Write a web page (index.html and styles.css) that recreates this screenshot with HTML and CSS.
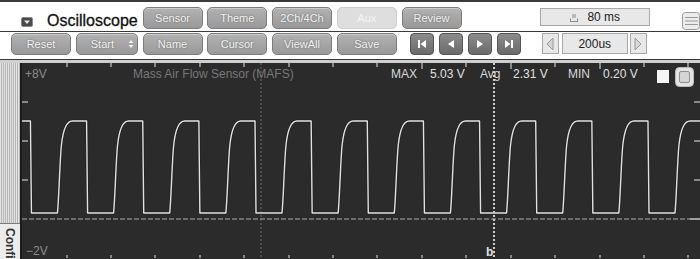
FILE: index.html
```html
<!DOCTYPE html>
<html>
<head>
<meta charset="utf-8">
<link rel="stylesheet" href="styles.css">
</head>
<body>
<div class="app">
  <div class="row row1">
    <span class="dd"><svg width="12" height="10" viewBox="0 0 12 10"><rect x="0.5" y="0.5" width="11" height="9" rx="1.5" fill="#4a4a4a" stroke="#8a8a8a"/><path d="M3 3.5h6L6 7z" fill="#e8e8e8"/></svg></span>
    <span class="title">Oscilloscope</span>
    <div class="btns">
      <div class="btn">Sensor</div>
      <div class="btn">Theme</div>
      <div class="btn">2Ch/4Ch</div>
      <div class="btn off">Aux</div>
      <div class="btn">Review</div>
    </div>
    <div class="timebox"><svg width="10" height="9" viewBox="0 0 10 9"><path d="M1 8.5h8M1.5 8.5v-3M8.5 8.5v-3M4 1v4M6 1v4" stroke="#8a8a8a" stroke-width="1" fill="none"/></svg><span>80 ms</span></div>
    <div class="listicon"><svg width="18" height="18" viewBox="0 0 18 18"><rect x="0.5" y="0.5" width="17" height="17" rx="3" fill="#ececec" stroke="#999"/><path d="M3 5.5h13M3 9h13M3 12.5h13" stroke="#999"/></svg></div>
  </div>
  <div class="row row2">
    <div class="btns">
      <div class="btn">Reset</div>
      <div class="btn start"><span>Start</span><svg width="6" height="10" viewBox="0 0 6 10"><path d="M0.5 4L3 1l2.5 3zM0.5 6L3 9l2.5-3z" fill="#f2f2f2"/></svg></div>
      <div class="btn">Name</div>
      <div class="btn">Cursor</div>
      <div class="btn">ViewAll</div>
      <div class="btn">Save</div>
    </div>
    <div class="media">
      <div class="mbtn"><svg width="10" height="10" viewBox="0 0 10 10"><rect x="1" y="1" width="2" height="8" fill="#fff"/><path d="M9 1L3.5 5L9 9z" fill="#fff"/></svg></div>
      <div class="mbtn"><svg width="10" height="10" viewBox="0 0 10 10"><path d="M8 1L2 5L8 9z" fill="#fff"/></svg></div>
      <div class="mbtn"><svg width="10" height="10" viewBox="0 0 10 10"><path d="M2 1L8 5L2 9z" fill="#fff"/></svg></div>
      <div class="mbtn"><svg width="10" height="10" viewBox="0 0 10 10"><path d="M1 1L6.5 5L1 9z" fill="#fff"/><rect x="7" y="1" width="2" height="8" fill="#fff"/></svg></div>
    </div>
    <div class="scale">
      <div class="arrow"><svg width="8" height="14" viewBox="0 0 8 14"><path d="M7 1L1 7l6 6z" fill="#d6d6d6" stroke="#9a9a9a"/></svg></div>
      <div class="val">200us</div>
      <div class="arrow"><svg width="8" height="14" viewBox="0 0 8 14"><path d="M1 1l6 6-6 6z" fill="#d6d6d6" stroke="#9a9a9a"/></svg></div>
    </div>
  </div>
  <div class="band"></div>
  <div class="main">
    <div class="side"><div class="cfg"><span>Config</span></div></div>
    <div class="plot">
      <svg width="678" height="196" viewBox="0 0 678 196">
        <line x1="239" y1="0" x2="239" y2="196" stroke="#4c4c4c" stroke-width="2" stroke-dasharray="2 2"/>
        <line x1="0" y1="156" x2="678" y2="156" stroke="#6c6c6c" stroke-width="2" stroke-dasharray="5 2"/>
        <line x1="668" y1="156" x2="678" y2="156" stroke="#a0a0a0" stroke-width="2"/>
        <g stroke="#a8a8a8" stroke-width="1.5">
          <path d="M45 0v4M89 0v4M133 0v4M178 0v4M222 0v4M267 0v4M311 0v4M355 0v4M400 0v6M444 0v4M489 0v6M533 0v4M578 0v6M622 0v4M666 0v4"/>
          <path d="M45 192v3M89 192v3M133 192v3M178 192v3M222 192v3M267 192v3M311 192v3M355 192v3M400 192v3M444 192v3M489 192v3M533 192v3M578 192v3M622 192v3M666 192v3"/>
          <path d="M0 39h6M0 78h6M0 117h6M672 39h6M672 78h6M672 117h6"/>
        </g>
        <path fill="none" stroke="#1a1a1a" stroke-width="3" stroke-linejoin="round" opacity="0.5" d="M-47.7 58 l1 92 h26 c1.5 -15 2.5 -55 4 -68 c1.5 -14 5 -24 11 -24 h14.14 l1 92 h26 c1.5 -15 2.5 -55 4 -68 c1.5 -14 5 -24 11 -24 h14.14 l1 92 h26 c1.5 -15 2.5 -55 4 -68 c1.5 -14 5 -24 11 -24 h14.14 l1 92 h26 c1.5 -15 2.5 -55 4 -68 c1.5 -14 5 -24 11 -24 h14.14 l1 92 h26 c1.5 -15 2.5 -55 4 -68 c1.5 -14 5 -24 11 -24 h14.14 l1 92 h26 c1.5 -15 2.5 -55 4 -68 c1.5 -14 5 -24 11 -24 h14.14 l1 92 h26 c1.5 -15 2.5 -55 4 -68 c1.5 -14 5 -24 11 -24 h14.14 l1 92 h26 c1.5 -15 2.5 -55 4 -68 c1.5 -14 5 -24 11 -24 h14.14 l1 92 h26 c1.5 -15 2.5 -55 4 -68 c1.5 -14 5 -24 11 -24 h14.14 l1 92 h26 c1.5 -15 2.5 -55 4 -68 c1.5 -14 5 -24 11 -24 h14.14 l1 92 h26 c1.5 -15 2.5 -55 4 -68 c1.5 -14 5 -24 11 -24 h14.14 l1 92 h26 c1.5 -15 2.5 -55 4 -68 c1.5 -14 5 -24 11 -24 h14.14 l1 92 h26 c1.5 -15 2.5 -55 4 -68 c1.5 -14 5 -24 11 -24 h14.14"/>
        <path fill="none" stroke="#e2e2e2" stroke-width="1.4" stroke-linejoin="round" d="M-47.7 58 l1 92 h26 c1.5 -15 2.5 -55 4 -68 c1.5 -14 5 -24 11 -24 h14.14 l1 92 h26 c1.5 -15 2.5 -55 4 -68 c1.5 -14 5 -24 11 -24 h14.14 l1 92 h26 c1.5 -15 2.5 -55 4 -68 c1.5 -14 5 -24 11 -24 h14.14 l1 92 h26 c1.5 -15 2.5 -55 4 -68 c1.5 -14 5 -24 11 -24 h14.14 l1 92 h26 c1.5 -15 2.5 -55 4 -68 c1.5 -14 5 -24 11 -24 h14.14 l1 92 h26 c1.5 -15 2.5 -55 4 -68 c1.5 -14 5 -24 11 -24 h14.14 l1 92 h26 c1.5 -15 2.5 -55 4 -68 c1.5 -14 5 -24 11 -24 h14.14 l1 92 h26 c1.5 -15 2.5 -55 4 -68 c1.5 -14 5 -24 11 -24 h14.14 l1 92 h26 c1.5 -15 2.5 -55 4 -68 c1.5 -14 5 -24 11 -24 h14.14 l1 92 h26 c1.5 -15 2.5 -55 4 -68 c1.5 -14 5 -24 11 -24 h14.14 l1 92 h26 c1.5 -15 2.5 -55 4 -68 c1.5 -14 5 -24 11 -24 h14.14 l1 92 h26 c1.5 -15 2.5 -55 4 -68 c1.5 -14 5 -24 11 -24 h14.14 l1 92 h26 c1.5 -15 2.5 -55 4 -68 c1.5 -14 5 -24 11 -24 h14.14"/>
        <line x1="472" y1="0" x2="472" y2="196" stroke="#cfcfcf" stroke-width="2" stroke-dasharray="2 2"/>
        <g class="ptext">
          <text x="3" y="15" fill="#8c8c8c">+8V</text>
          <text x="111" y="15" fill="#787878">Mass Air Flow Sensor (MAFS)</text>
          <text x="369" y="15" fill="#d8d8d8">MAX</text>
          <text x="408" y="15" fill="#e0e0e0">5.03 V</text>
          <text x="458" y="15" fill="#d8d8d8">Avg</text>
          <text x="491" y="15" fill="#e0e0e0">2.31 V</text>
          <text x="546" y="15" fill="#d8d8d8">MIN</text>
          <text x="581" y="15" fill="#e0e0e0">0.20 V</text>
          <text x="4" y="192" fill="#8c8c8c">−2V</text>
          <text x="464" y="193" fill="#e0e0e0" font-weight="bold">b</text>
        </g>
        <rect x="635" y="7" width="12" height="13" fill="#f6f6f6"/>
        <rect x="653.5" y="4.5" width="18" height="19" rx="4" fill="#e4e4e4" stroke="#bdbdbd"/>
        <rect x="657.5" y="8.5" width="10" height="11" rx="1.5" fill="#d4d4d4" stroke="#8f8f8f"/>
      </svg>
    </div>
  </div>
</div>
</body>
</html>
```
FILE: styles.css
```css
* { box-sizing: border-box; }
html, body { margin: 0; padding: 0; }
body {
  width: 700px;
  height: 259px;
  overflow: hidden;
  background: #fff;
  font-family: "Liberation Sans", Arial, sans-serif;
}
.app { width: 700px; height: 259px; overflow: hidden; }
.row { display: flex; align-items: flex-start; width: 700px; overflow: hidden; }
.row1 {
  height: 32px;
  border-top: 2px solid #3a3a3a;
  border-bottom: 1px solid #3a3a3a;
  padding-left: 21px;
}
.row2 {
  height: 28px;
  border-bottom: 1px solid #3a3a3a;
  padding-left: 11px;
}
.dd { display: block; margin-top: 15px; height: 10px; }
.dd svg { display: block; }
.title {
  display: block;
  width: 110px;
  padding-left: 14px;
  margin-top: 10px;
  font-size: 16px;
  line-height: 18px;
  color: #111;
  -webkit-text-stroke: 0.3px #111;
}
.btns { display: flex; gap: 4.75px; }
.row1 .btns { margin-top: 5px; }
.row2 .btns { margin-top: 1px; }
.btn {
  width: 60px;
  height: 22px;
  display: flex;
  align-items: center;
  justify-content: center;
  background: linear-gradient(#b2b2b2, #999);
  border: 1px solid #7c7c7c;
  border-radius: 5px;
  box-shadow: inset 0 1px 0 rgba(255,255,255,0.35);
  color: #f2f2f2;
  font-size: 11px;
  text-shadow: 0 0 2px #666;
}
.btn.off {
  background: #dedede;
  border-color: #cdcdcd;
  color: #f4f4f4;
  text-shadow: none;
  box-shadow: none;
}
.btn.start { width: 62px; justify-content: flex-start; padding-left: 14px; }
.btn.start svg { margin-left: 14px; display: block; }
.timebox {
  margin-left: 78px;
  margin-top: 6px;
  width: 111px;
  height: 18px;
  display: flex;
  align-items: center;
  justify-content: center;
  gap: 8px;
  background: #e8e8e8;
  border: 1px solid #a8a8a8;
  font-size: 12px;
  color: #222;
}
.timebox svg { display: block; }
.listicon { margin-left: 32px; margin-top: 10px; width: 18px; height: 18px; }
.listicon svg { display: block; }
.media { display: flex; gap: 5px; margin-left: 13px; margin-top: 1px; }
.mbtn {
  width: 24px;
  height: 22px;
  display: flex;
  align-items: center;
  justify-content: center;
  background: linear-gradient(#8c8c8c, #6a6a6a);
  border: 1px solid #555;
  border-radius: 4px;
}
.mbtn svg { display: block; }
.scale { display: flex; margin-left: 21px; margin-top: 1px; }
.arrow {
  width: 17px;
  height: 21px;
  display: flex;
  align-items: center;
  justify-content: center;
  background: #e8e8e8;
  border: 1px solid #a8a8a8;
}
.arrow svg { display: block; }
.val {
  width: 66px;
  height: 21px;
  margin: 0 2px 0 3px;
  display: flex;
  align-items: center;
  justify-content: center;
  background: #e8e8e8;
  border: 1px solid #a8a8a8;
  font-size: 12px;
  color: #222;
}
.band { height: 3px; background: #cfcfcf; }
.main { display: flex; height: 196px; }
.side {
  width: 22px;
  height: 196px;
  border-right: 2px solid #1c1c1c;
  background: repeating-linear-gradient(90deg, #e4e4e4 0 1px, #b4b4b4 1px 2px);
  display: flex;
  flex-direction: column;
  justify-content: flex-end;
}
.cfg {
  height: 36px;
  background: #ececec;
  border-top: 1px solid #7a7a7a;
  display: flex;
  justify-content: center;
  padding-top: 4px;
  overflow: hidden;
}
.cfg span {
  writing-mode: vertical-rl;
  font-size: 12px;
  font-weight: bold;
  color: #333;
  line-height: 12px;
}
.plot { width: 678px; height: 196px; background: #2b2b2b; overflow: hidden; }
.plot svg { display: block; }
.ptext text { font-family: "Liberation Sans", Arial, sans-serif; font-size: 12px; }
```
